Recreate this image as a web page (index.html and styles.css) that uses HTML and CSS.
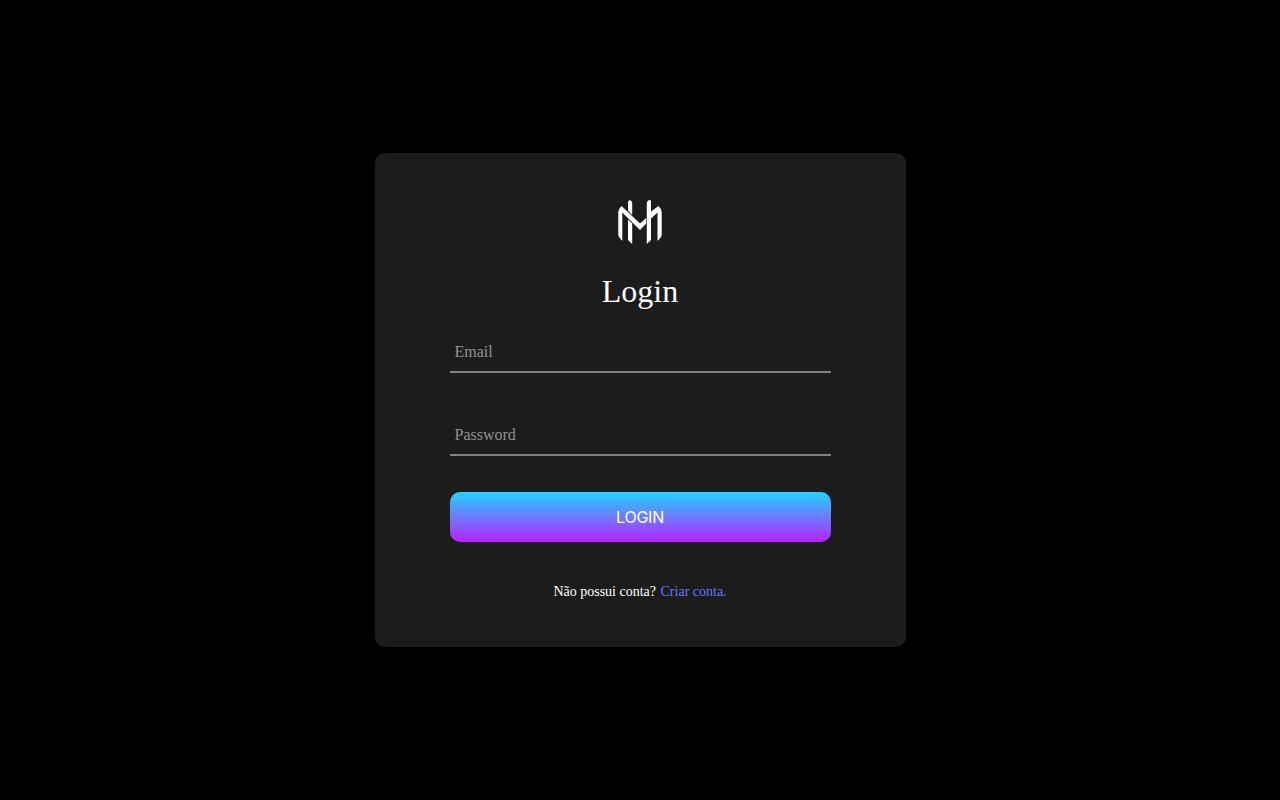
FILE: index.html
```html
<!DOCTYPE html>
<html lang="pt-BR">
<head>
<meta charset="utf-8">
<title>Login</title>
<link rel="stylesheet" href="styles.css">
</head>
<body>
<main class="card">
<svg class="logo" viewBox="0 0 60 60" aria-hidden="true">
<path d="M8.300 20 Q8.500 17 11.500 14 L30 31.500 L36.200 26 V31.500 L30 38 L12.300 20.500 V49 L9 45 Q8.300 44 8.300 42Z"/>
<path d="M18 9.500 L19.800 8 Q22.200 9 22.200 11 V23 L18 18.800Z"/>
<path d="M18 27.500 L22.200 31.500 V52 L18.500 48.500 L18 47Z"/>
<path d="M36.800 10.500 Q37.500 8.500 40 7.800 L41 9 V19.500 L48.500 14 Q51.700 17 51.700 20 V42 Q51.700 44 51 45 L47.500 49 V20.500 L41 26.500 V48 L36.800 52Z"/>
</svg>
<h1 class="title">Login</h1>
<form class="form">
<input class="field" type="email" placeholder="Email">
<input class="field" type="password" placeholder="Password">
<button class="submit" type="button">LOGIN</button>
</form>
<p class="signup">Não possui conta? <a class="link" href="#">Criar conta.</a></p>
</main>
</body>
</html>
```
FILE: styles.css
```css
* { box-sizing: border-box; margin: 0; padding: 0; }
body { min-height: 100vh; display: flex; align-items: center; justify-content: center; background: #000; color: #fff; font-family: "Liberation Serif", serif; }
.card { width: 531px; height: 494px; padding: 39px 75px 0; display: flex; flex-direction: column; align-items: center; border-radius: 10px; background: #1c1c1c; }
.logo { width: 60px; height: 60px; fill: #fff; }
.title { margin-top: 20px; font-size: 32px; font-weight: 400; line-height: 38px; }
.form { width: 100%; margin-top: 21px; display: flex; flex-direction: column; }
.field { height: 42px; margin-bottom: 41px; padding: 2px 5px 0; border: 0; border-bottom: 2px solid #808080; background: transparent; color: #fff; font: 16px "Liberation Serif", serif; }
.field + .submit { margin-top: -5px; }
.field::placeholder { color: #929292; }
.submit { height: 50px; border: 0; border-radius: 10px; background: linear-gradient(#22d3ff, #7a6cff 58%, #b522ff); color: #fff; font: 400 16px Inter, sans-serif; letter-spacing: -0.25px; }
.signup { margin-top: 42px; font-size: 14px; line-height: 16px; }
.link { margin-left: 1px; color: #6478ff; text-decoration: none; }
```
